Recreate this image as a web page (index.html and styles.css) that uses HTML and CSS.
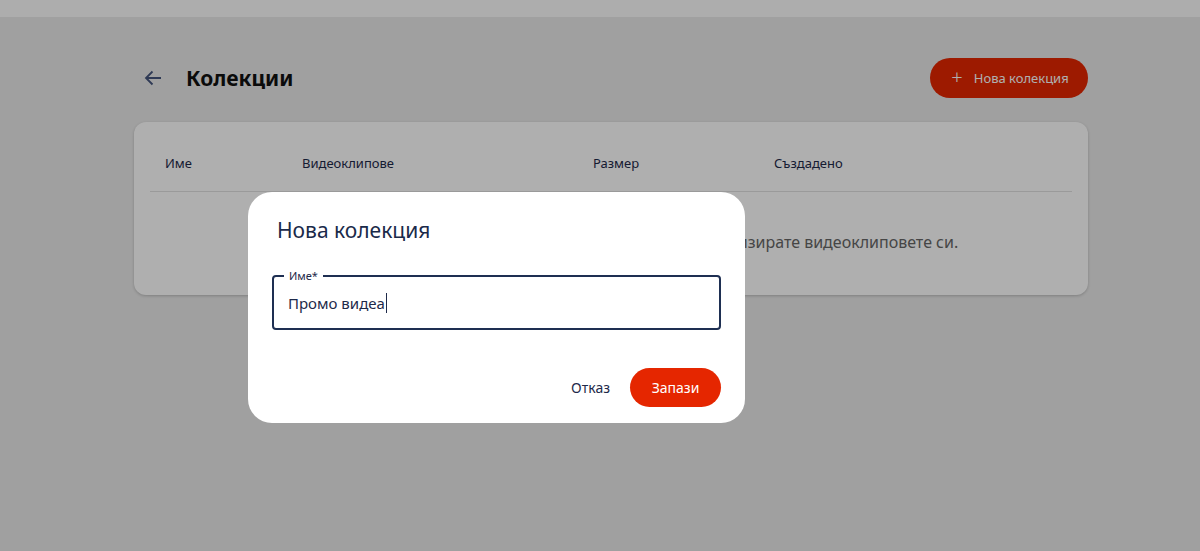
FILE: index.html
```html
<!DOCTYPE html>
<html lang="bg">
<head>
<meta charset="utf-8">
<link rel="stylesheet" href="styles.css">
</head>
<body>
<div class="topbar"></div>
<main class="page">
  <header class="head">
    <div class="head-left">
      <svg class="back" width="24" height="24" viewBox="0 0 24 24"><path d="M20 12H5.5M11.5 5.5 5 12l6.5 6.5" fill="none" stroke="#45557c" stroke-width="1.8"/></svg>
      <h1 class="title">Колекции</h1>
    </div>
    <button class="new-btn"><span class="plus">+</span>Нова колекция</button>
  </header>
  <section class="card">
    <div class="thead">
      <div class="th">Име</div>
      <div class="th">Видеоклипове</div>
      <div class="th">Размер</div>
      <div class="th">Създадено</div>
    </div>
    <p class="empty">Все още нямате колекции. Създайте колекция, за да организирате видеоклиповете си.</p>
  </section>
</main>
<div class="backdrop">
  <div class="dialog">
    <h2 class="dlg-title">Нова колекция</h2>
    <div class="field">
      <span class="label">Име*</span>
      <span class="value">Промо видеа</span><span class="caret"></span>
    </div>
    <div class="actions">
      <button class="cancel">Отказ</button>
      <button class="save">Запази</button>
    </div>
  </div>
</div>
</body>
</html>
```

FILE: styles.css
```css
* { box-sizing: border-box; }
html, body { margin: 0; height: 100%; }
body {
  font-family: "Noto Sans", "Open Sans", sans-serif;
  background: #e9e9e9;
  color: #1e2a4a;
  position: relative;
  overflow: hidden;
}
.topbar { height: 17px; background: #fcfcfc; }
.page { width: 954px; margin-left: 134px; padding-top: 41px; }
.head { display: flex; justify-content: space-between; align-items: center; height: 39px; }
.head-left { display: flex; align-items: center; gap: 21px; padding-left: 7px; }
.back { display: block; }
.title { margin: 0; font-size: 21px; font-weight: 700; color: #111; }
.new-btn {
  height: 40px; width: 158px; border: 0; border-radius: 20px;
  background: #e52600; color: #fff; font-family: inherit; font-size: 13px;
  display: flex; align-items: center; justify-content: center; gap: 11px;
  padding-left: 8px;
}
.plus { font-size: 20px; font-weight: 300; line-height: 1; margin-top: -2px; }
.card {
  margin-top: 25px; background: #fff; border-radius: 12px;
  padding: 0 16px; height: 173px;
  box-shadow: 0 1px 3px rgba(0,0,0,0.2);
}
.thead {
  display: grid; grid-template-columns: 137px 291px 181px 1fr;
  height: 70px; align-items: center; padding-left: 15px; padding-top: 13px;
  border-bottom: 1px solid #e0e0e0; font-size: 13px;
}
.empty { margin: 0; padding: 39px 0 0 16px; text-align: center; color: #666; font-size: 16px; }
.backdrop { position: absolute; inset: 0; background: rgba(0,0,0,0.314); }
.dialog {
  position: absolute; left: 248px; top: 192px; width: 497px; height: 231px;
  background: #fff; border-radius: 24px; padding: 22px 24px 0 24px;
}
.dlg-title { margin: 0 0 0 5px; font-size: 21px; font-weight: 400; color: #1a2a4a; line-height: 32px; }
.field {
  position: relative; margin-top: 29px; height: 55px;
  border: 2px solid #1e2f52; border-radius: 4px; padding: 0 0 0 14px;
  font-size: 15px; display: flex; align-items: center;
}
.label {
  position: absolute; top: -9px; left: 10px; padding: 0 5px; background: #fff;
  font-size: 11px; line-height: 16px; color: #1e2a4a;
}
.value { color: #1e2a4a; }
.caret { display: inline-block; width: 1px; height: 20px; background: #1e2a4a; margin-left: 1px; }
.actions { display: flex; justify-content: flex-end; align-items: center; gap: 20px; margin-top: 38px; }
.cancel { border: 0; background: none; font-family: inherit; font-size: 14px; color: #1e2a4a; padding: 0; }
.save {
  width: 91px; height: 39px; border: 0; border-radius: 20px; background: #e52600;
  color: #fff; font-family: inherit; font-size: 14px;
}
```
